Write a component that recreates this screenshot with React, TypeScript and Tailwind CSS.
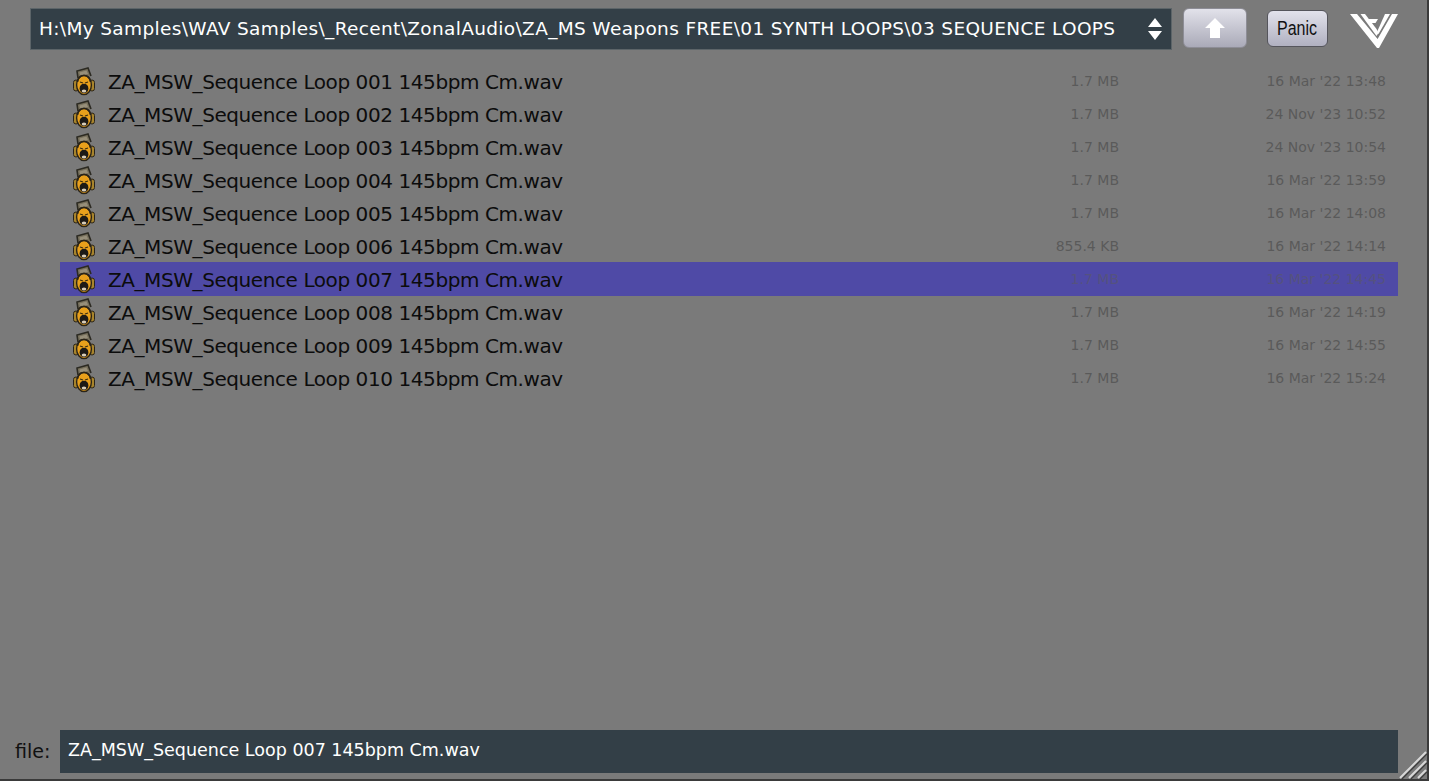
import React from 'react';

const files = [
    { name: 'ZA_MSW_Sequence Loop 001 145bpm Cm.wav', size: '1.7 MB', date: "16 Mar '22 13:48" },
    { name: 'ZA_MSW_Sequence Loop 002 145bpm Cm.wav', size: '1.7 MB', date: "24 Nov '23 10:52" },
    { name: 'ZA_MSW_Sequence Loop 003 145bpm Cm.wav', size: '1.7 MB', date: "24 Nov '23 10:54" },
    { name: 'ZA_MSW_Sequence Loop 004 145bpm Cm.wav', size: '1.7 MB', date: "16 Mar '22 13:59" },
    { name: 'ZA_MSW_Sequence Loop 005 145bpm Cm.wav', size: '1.7 MB', date: "16 Mar '22 14:08" },
    { name: 'ZA_MSW_Sequence Loop 006 145bpm Cm.wav', size: '855.4 KB', date: "16 Mar '22 14:14" },
    { name: 'ZA_MSW_Sequence Loop 007 145bpm Cm.wav', size: '1.7 MB', date: "16 Mar '22 14:45", selected: true },
    { name: 'ZA_MSW_Sequence Loop 008 145bpm Cm.wav', size: '1.7 MB', date: "16 Mar '22 14:19" },
    { name: 'ZA_MSW_Sequence Loop 009 145bpm Cm.wav', size: '1.7 MB', date: "16 Mar '22 14:55" },
    { name: 'ZA_MSW_Sequence Loop 010 145bpm Cm.wav', size: '1.7 MB', date: "16 Mar '22 15:24" },
];

function WavIcon() {
    return (
        <svg width="24" height="30" viewBox="0 0 24 30" className="shrink-0">
            {/* tilted box behind the head */}
            <path d="M6 11 L5 4 L16 1 L19 9" fill="#77705c" stroke="#2c2a22" strokeWidth="1.6" />
            <path d="M8 8 L7.5 5.5 L14.5 3.5 L16 7" fill="#978f7a" />
            {/* ear cups */}
            <rect x="1.5" y="13" width="5" height="11" rx="2.5" fill="#a8842c" stroke="#2a2419" />
            <rect x="17.5" y="13" width="5" height="11" rx="2.5" fill="#a8842c" stroke="#2a2419" />
            {/* face */}
            <ellipse cx="12" cy="18" rx="7.4" ry="9.6" fill="#e8a01c" stroke="#2a2419" strokeWidth="1.4" />
            <path d="M5.5 15 C6 10 9 8.5 12 8.5 C15 8.5 18 10 18.5 15" fill="none" stroke="#2a2419" strokeWidth="1.6" />
            <path d="M8 15 L11 16 M16 15 L13 16" stroke="#3a2c10" strokeWidth="1.2" />
            {/* open mouth */}
            <ellipse cx="12" cy="21.5" rx="4.4" ry="4.8" fill="#1d1a16" />
            <ellipse cx="12" cy="24" rx="2.3" ry="1.5" fill="#d9cdb8" />
        </svg>
    );
}

function Logo() {
    return (
        <svg width="48" height="36" viewBox="0 0 48 36" className="shrink-0">
            <g fill="#ffffff">
                <path d="M0 1 L7 1 L27.6 26 L42 1 L48 1 L29 35 L27 35 Z" />
                <path d="M10.5 1 L15 1 L26.5 16 L28.5 20 L26.5 23 Z" />
                <path d="M18 6 L28 6 L25.5 10 L20.5 10 Z" />
                <path d="M27 19 L35 1 L40 1 L28.5 21 Z" />
            </g>
        </svg>
    );
}

export default function App() {
    return (
        <div className="h-[781px] w-[1429px] flex flex-col overflow-hidden bg-[#7a7a7a] border-r-2 border-b-2 border-[#3a3a3a] font-['DejaVu_Sans',sans-serif] relative">
            <div className="flex items-center pl-[30px] pt-2 h-[50px] shrink-0">
                <div className="w-[1142px] h-[42px] bg-[#333f47] border border-[#5c6468] flex items-center justify-between pl-2 pr-[9px] shrink-0">
                    <span className="text-white text-[18.5px] leading-none tracking-[0.35px] whitespace-nowrap">
                        H:\My Samples\WAV Samples\_Recent\ZonalAudio\ZA_MS Weapons FREE\01 SYNTH LOOPS\03 SEQUENCE LOOPS
                    </span>
                    <svg width="14" height="24" viewBox="0 0 14 24" className="shrink-0">
                        <path d="M7 1 L14 10 L0 10 Z M0 14 L14 14 L7 23 Z" fill="#ffffff" />
                    </svg>
                </div>
                <button className="ml-[11px] w-[64px] h-[40px] -mt-[2px] rounded-[6px] border border-[#8d8d96] bg-gradient-to-b from-[#e2e2ea] to-[#aaaab8] flex items-center justify-center shrink-0">
                    <svg width="20" height="20" viewBox="0 0 20 20">
                        <path d="M10 0 L20 10 L15 10 L15 20 L5 20 L5 10 L0 10 Z" fill="#ffffff" />
                    </svg>
                </button>
                <button className="ml-[20px] w-[61px] h-[37px] -mt-[2px] rounded-[6px] border border-[#55555c] bg-gradient-to-b from-[#e2e2ec] to-[#b0b0c0] text-[#111111] text-[20px] font-['Liberation_Sans',sans-serif] flex items-center justify-center shrink-0">
                    <span className="inline-block scale-x-[0.8]">Panic</span>
                </button>
                <div className="ml-[22px] mt-[4px]">
                    <Logo />
                </div>
            </div>

            <div className="mt-[15px] ml-[60px] w-[1338px] flex flex-col">
                {files.map((f) => (
                    <div
                        key={f.name}
                        className={`flex items-center pl-[12px] ${f.selected ? 'h-[34px] -mt-px pt-px bg-[#4f4aa6]' : 'h-[33px]'}`}
                    >
                        <WavIcon />
                        <span className="ml-[12px] w-[600px] text-[#0c0c0c] text-[20px] tracking-[-0.42px] leading-none whitespace-nowrap">{f.name}</span>
                        <span className={`w-[411px] text-right text-[14px] whitespace-nowrap ${f.selected ? 'text-[#55527f]' : 'text-[#5a5a5a]'}`}>{f.size}</span>
                        <span className={`w-[267px] text-right text-[14px] whitespace-nowrap ${f.selected ? 'text-[#55527f]' : 'text-[#5a5a5a]'}`}>{f.date}</span>
                    </div>
                ))}
            </div>

            <div className="mt-auto mb-[6px] flex items-center pl-[15px]">
                <span className="w-[45px] text-[#111111] text-[19px] leading-none">file:</span>
                <div className="w-[1338px] h-[43px] bg-[#333f47] flex items-center pl-2 pb-[2px] text-white text-[17.5px] leading-none whitespace-nowrap">
                    ZA_MSW_Sequence Loop 007 145bpm Cm.wav
                </div>
            </div>

            <svg width="28" height="28" viewBox="0 0 28 28" className="absolute right-0 bottom-0">
                <path d="M1 27 L27 1 M10 27 L27 10 M19 27 L27 19" stroke="#d8d8d8" strokeWidth="2" />
                <path d="M3 28 L28 3 M12 28 L28 12 M21 28 L28 21" stroke="#3c3c3c" strokeWidth="1.2" />
            </svg>
        </div>
    );
}
